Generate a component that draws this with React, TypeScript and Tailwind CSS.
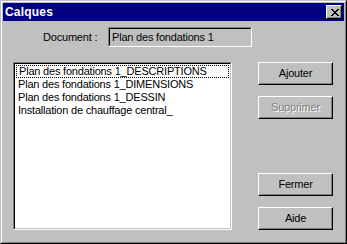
import React from "react";

const items = [
  "Plan des fondations 1_DESCRIPTIONS",
  "Plan des fondations 1_DIMENSIONS",
  "Plan des fondations 1_DESSIN",
  "Installation de chauffage central_",
];

function CloseGlyph() {
  // classic 8x7 pixel "x"
  const rows = ["11000011", "01100110", "00111100", "00011000", "00111100", "01100110", "11000011"];
  return (
    <svg width="8" height="7" viewBox="0 0 8 7" shapeRendering="crispEdges">
      {rows.map((row, y) =>
        row.split("").map((c, x) => (c === "1" ? <rect key={`${x}-${y}`} x={x} y={y} width="1" height="1" fill="#000" /> : null))
      )}
    </svg>
  );
}

function Button({ label, disabled }: { label: string; disabled?: boolean }) {
  return (
    <div className="w-[75px] h-[23px] border border-t-white border-l-white border-r-black border-b-black">
      <div className="w-full h-full border border-t-[#c0c0c0] border-l-[#c0c0c0] border-r-[#808080] border-b-[#808080] flex items-center justify-center">
        {disabled ? (
          <span className="text-[#808080] [text-shadow:1px_1px_0_#ffffff]">{label}</span>
        ) : (
          <span className="text-black">{label}</span>
        )}
      </div>
    </div>
  );
}

export default function App() {
  return (
    <div
      className="w-[347px] h-[244px] bg-[#c0c0c0] text-[11px] leading-none tracking-[-0.2px] border border-t-[#c0c0c0] border-l-[#c0c0c0] border-r-black border-b-black"
      style={{ fontFamily: '"Liberation Sans", Arial, sans-serif' }}
    >
      <div className="w-full h-full border border-t-white border-l-white border-r-[#808080] border-b-[#808080] p-[1px] flex flex-col">
        {/* Title bar */}
        <div className="h-[18px] bg-[#000080] flex items-center justify-between pl-[2px] pr-[2px]">
          <span className="text-white font-bold text-[12px] tracking-[0.2px]">Calques</span>
          <div className="w-[16px] h-[14px] border border-t-white border-l-white border-r-black border-b-black bg-[#c0c0c0]">
            <div className="w-full h-full border border-t-[#c0c0c0] border-l-[#c0c0c0] border-r-[#808080] border-b-[#808080] flex items-start justify-center pt-[2px] pl-[1px]">
              <CloseGlyph />
            </div>
          </div>
        </div>

        {/* Body */}
        <div className="flex-1 flex flex-col pt-[6px] pl-[10px] pr-[10px]">
          <div className="flex items-center h-[20px]">
            <span className="ml-[30px] w-[52px] text-black whitespace-nowrap">Document :</span>
            <div className="ml-[13px] w-[144px] h-[20px] border border-t-[#808080] border-l-[#808080] border-r-white border-b-white">
              <div className="w-full h-full border border-t-black border-l-black border-r-[#c0c0c0] border-b-[#c0c0c0] flex items-center pl-[2px] text-black">
                Plan des fondations 1
              </div>
            </div>
          </div>

          <div className="flex mt-[15px]">
            <div className="w-[219px] h-[168px] border border-t-[#808080] border-l-[#808080] border-r-white border-b-white">
              <div className="w-full h-full border border-t-black border-l-black border-r-[#c0c0c0] border-b-[#c0c0c0] bg-white p-[1px]">
                {items.map((it, i) => (
                  <div
                    key={it}
                    className={`h-[13px] flex items-center pl-[2px] text-black whitespace-nowrap ${
                      i === 0 ? "border border-dotted border-black pl-[1px]" : ""
                    }`}
                  >
                    {it}
                  </div>
                ))}
              </div>
            </div>

            <div className="ml-[26px] flex flex-col">
              <Button label="Ajouter" />
              <div className="mt-[11px]">
                <Button label="Supprimer" disabled />
              </div>
              <div className="mt-[54px]">
                <Button label="Fermer" />
              </div>
              <div className="mt-[11px]">
                <Button label="Aide" />
              </div>
            </div>
          </div>
        </div>
      </div>
    </div>
  );
}
